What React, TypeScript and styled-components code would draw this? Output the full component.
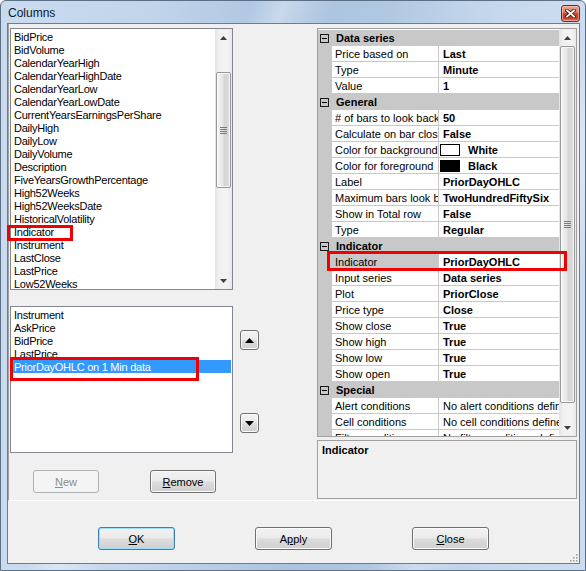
import React from 'react';
import styled, { createGlobalStyle } from 'styled-components';

const FONT = `"Liberation Sans", Arial, sans-serif`;
const GRID_LINE = '#c8c8c8';

const GlobalStyle = createGlobalStyle`
  html, body { margin: 0; padding: 0; }
  body { width: 586px; height: 571px; overflow: hidden; font-family: ${FONT}; background: #fff; }
  * { box-sizing: border-box; }
`;

const Window = styled.div`
  width: 586px;
  height: 571px;
  border: 1px solid #5d6f84;
  border-radius: 6px 6px 0 0;
  display: flex;
  flex-direction: column;
  font-family: ${FONT};
  background:
    linear-gradient(112deg, transparent 0%, transparent 31%, rgba(255,255,255,0.35) 35%, transparent 41%, transparent 73%, rgba(255,255,255,0.3) 79%, transparent 85%),
    linear-gradient(to right, #cadbef 0%, #c2d5eb 25%, #abc3df 50%, #b0c7e1 65%, #c6d8ed 85%, #ccdcf0 100%);
`;

const TitleBar = styled.div`
  height: 22px;
  display: flex;
  align-items: flex-start;
  padding: 0 5px 0 7px;
`;

const Title = styled.div`
  margin-top: 5px;
  font-size: 12px;
  line-height: 15px;
  color: #0b1a2e;
  flex: 1;
`;

const CloseBtn = styled.div`
  margin-top: 4px;
  width: 19px;
  height: 17px;
  border: 1px solid #6e2d22;
  border-radius: 3px;
  background: linear-gradient(to bottom, #eaa897 0%, #dc7a62 45%, #c9482d 50%, #c43e28 80%, #de7d66 100%);
  box-shadow: inset 0 0 0 1px rgba(255, 210, 190, 0.5);
  display: flex;
  align-items: center;
  justify-content: center;
`;

const Client = styled.div`
  flex: 1;
  margin: 0 5px 6px 6px;
  border: 1px solid #6b7d92;
  background: #f0f0f0;
  display: flex;
  flex-direction: column;
`;

const SplitArea = styled.div`
  height: 477px;
  display: flex;
  border-left: 1px solid #a0a0a0;
  border-bottom: 1px solid #ffffff;
`;

const LeftPanel = styled.div`
  position: relative;
  width: 308px;
  padding: 4px 0 0 1px;
  display: flex;
  flex-direction: column;
`;

const RightPanel = styled.div`
  position: relative;
  width: 260px;
  padding-top: 4px;
  display: flex;
  flex-direction: column;
  gap: 3px;
`;

const ListBox = styled.div<{ $h: number }>`
  width: 223px;
  height: ${p => p.$h}px;
  border: 1px solid #828790;
  background: #fff;
  display: flex;
  overflow: hidden;
`;

const ListItems = styled.div`
  flex: 1;
  padding: 1px 1px 0 1px;
  overflow: hidden;
`;

const ListItem = styled.div<{ $selected?: boolean }>`
  height: 13px;
  line-height: 14px;
  padding-left: 2px;
  font-size: 11px;
  letter-spacing: -0.25px;
  white-space: nowrap;
  color: ${p => (p.$selected ? '#fff' : '#000')};
  background: ${p => (p.$selected ? '#3399ff' : 'transparent')};
`;

const VScroll = styled.div`
  width: 17px;
  flex: none;
  display: flex;
  flex-direction: column;
  background: linear-gradient(to right, #e4e4e4 0%, #f1f1f1 25%, #f3f3f3 70%, #e9e9e9 100%);
`;

const ScrollArrow = styled.div`
  height: 17px;
  flex: none;
  display: flex;
  align-items: center;
  justify-content: center;
`;

const ScrollTrack = styled.div<{ $offset: number }>`
  flex: 1;
  padding: ${p => p.$offset}px 1px 0 1px;
`;

const ScrollThumb = styled.div<{ $h: number }>`
  height: ${p => p.$h}px;
  border: 1px solid #979797;
  border-radius: 2px;
  background: linear-gradient(to right, #f3f3f3 0%, #e6e6e6 45%, #d4d4d4 55%, #dcdcdc 100%);
  box-shadow: inset 0 0 0 1px rgba(255, 255, 255, 0.75);
  display: flex;
  align-items: center;
  justify-content: center;
`;

const LowerRow = styled.div`
  margin-top: 16px;
  display: flex;
`;

const ArrowCol = styled.div`
  margin-left: 7px;
  padding-top: 24px;
  display: flex;
  flex-direction: column;
  gap: 63px;
`;

const ButtonRow = styled.div<{ $gap: number; $left: number }>`
  display: flex;
  gap: ${p => p.$gap}px;
  padding-left: ${p => p.$left}px;
`;

const LeftButtons = styled(ButtonRow)`
  margin-top: 17px;
`;

const Btn = styled.button<{ $w: number; $h: number; $default?: boolean }>`
  width: ${p => p.$w}px;
  height: ${p => p.$h}px;
  padding: 0;
  margin: 0;
  font-family: ${FONT};
  font-size: 11px;
  color: #000;
  border: 1px solid ${p => (p.$default ? '#3c7fb1' : '#707070')};
  border-radius: 3px;
  background: linear-gradient(to bottom, #f2f2f2 0%, #ebebeb 46%, #dddddd 52%, #cfcfcf 100%);
  box-shadow: inset 0 0 0 1px ${p => (p.$default ? '#9fdcf7' : '#fbfbfb')};
  display: flex;
  align-items: center;
  justify-content: center;
  &:disabled {
    border-color: #adb2b5;
    background: #f4f4f4;
    color: #8d8d8d;
    box-shadow: none;
  }
`;

const Grid = styled.div`
  height: 409px;
  border: 1px solid #a0a0a0;
  background: #fff;
  display: flex;
  overflow: hidden;
`;

const GridRows = styled.div`
  flex: 1;
  padding-top: 1px;
  overflow: hidden;
`;

const PropRow = styled.div<{ $category?: boolean }>`
  display: grid;
  grid-template-columns: 14px 107px 1fr;
  height: 16px;
  font-size: 11px;
  background: ${p => (p.$category ? GRID_LINE : '#fff')};
`;

const Gutter = styled.div`
  background: ${GRID_LINE};
  display: flex;
  align-items: center;
  padding-left: 2px;
`;

const Expander = styled.div`
  width: 9px;
  height: 9px;
  border: 1px solid #1a1a1a;
  display: flex;
  align-items: center;
  justify-content: center;
  &::after {
    content: '';
    width: 5px;
    height: 1px;
    background: #000;
  }
`;

const CategoryLabel = styled.div`
  grid-column: 2 / 4;
  padding-left: 4px;
  line-height: 16px;
  font-weight: bold;
  color: #000;
  white-space: nowrap;
`;

const NameCell = styled.div<{ $selected?: boolean }>`
  border-right: 1px solid ${GRID_LINE};
  border-bottom: 1px solid ${GRID_LINE};
  padding-left: 3px;
  line-height: 16px;
  white-space: nowrap;
  overflow: hidden;
  color: #000;
  background: ${p => (p.$selected ? GRID_LINE : '#fff')};
`;

const ValueCell = styled.div<{ $plain?: boolean }>`
  border-bottom: 1px solid ${GRID_LINE};
  padding-left: 4px;
  line-height: 16px;
  white-space: nowrap;
  overflow: hidden;
  font-weight: ${p => (p.$plain ? 'normal' : 'bold')};
  color: #000;
  display: flex;
  align-items: center;
`;

const Swatch = styled.span<{ $color: string }>`
  width: 20px;
  height: 12px;
  margin-left: -3px;
  margin-right: 8px;
  border: 1px solid #000;
  background: ${p => p.$color};
  flex: none;
`;

const Description = styled.div`
  height: 59px;
  border: 1px solid #a0a0a0;
  background: #f0f0f0;
  padding: 3px 4px;
  font-size: 11px;
  font-weight: bold;
  line-height: 13px;
  color: #000;
`;

const Footer = styled.div`
  flex: 1;
  display: flex;
  padding: 26px 0 0 90px;
`;

const Grip = styled.div`
  margin-left: auto;
  align-self: flex-end;
  margin-bottom: 1px;
  margin-right: 1px;
  display: flex;
`;

const RedBox = styled.div<{ $x: number; $y: number; $w: number; $h: number }>`
  position: absolute;
  left: ${p => p.$x}px;
  top: ${p => p.$y}px;
  width: ${p => p.$w}px;
  height: ${p => p.$h}px;
  border: 3px solid #f00000;
  pointer-events: none;
`;

const UpGlyph = () => (
  <svg width="7" height="4" viewBox="0 0 7 4">
    <polygon points="3.5,0 7,4 0,4" fill="#3f3f3f" />
  </svg>
);
const DownGlyph = () => (
  <svg width="7" height="4" viewBox="0 0 7 4">
    <polygon points="0,0 7,0 3.5,4" fill="#3f3f3f" />
  </svg>
);
const GripLines = () => (
  <svg width="7" height="7" viewBox="0 0 7 7">
    {[0, 2, 4, 6].map(y => (
      <line key={y} x1="0" x2="7" y1={y + 0.5} y2={y + 0.5} stroke="#7a7a7a" strokeWidth="1" />
    ))}
  </svg>
);

const Scrollbar: React.FC<{ offset: number; thumb: number }> = ({ offset, thumb }) => (
  <VScroll>
    <ScrollArrow><UpGlyph /></ScrollArrow>
    <ScrollTrack $offset={offset}>
      <ScrollThumb $h={thumb}><GripLines /></ScrollThumb>
    </ScrollTrack>
    <ScrollArrow><DownGlyph /></ScrollArrow>
  </VScroll>
);

const available = [
  'BidPrice', 'BidVolume', 'CalendarYearHigh', 'CalendarYearHighDate', 'CalendarYearLow',
  'CalendarYearLowDate', 'CurrentYearsEarningsPerShare', 'DailyHigh', 'DailyLow', 'DailyVolume',
  'Description', 'FiveYearsGrowthPercentage', 'High52Weeks', 'High52WeeksDate', 'HistoricalVolatility',
  'Indicator', 'Instrument', 'LastClose', 'LastPrice', 'Low52Weeks',
];

const selectedCols = ['Instrument', 'AskPrice', 'BidPrice', 'LastPrice', 'PriorDayOHLC on 1 Min data'];

type Prop = { name: string; value: string; swatch?: string; plain?: boolean; selected?: boolean };
type Cat = { title: string; props: Prop[] };

const categories: Cat[] = [
  {
    title: 'Data series',
    props: [
      { name: 'Price based on', value: 'Last' },
      { name: 'Type', value: 'Minute' },
      { name: 'Value', value: '1' },
    ],
  },
  {
    title: 'General',
    props: [
      { name: '# of bars to look back', value: '50' },
      { name: 'Calculate on bar close', value: 'False' },
      { name: 'Color for background', value: 'White', swatch: '#fff' },
      { name: 'Color for foreground', value: 'Black', swatch: '#000' },
      { name: 'Label', value: 'PriorDayOHLC' },
      { name: 'Maximum bars look back', value: 'TwoHundredFiftySix' },
      { name: 'Show in Total row', value: 'False' },
      { name: 'Type', value: 'Regular' },
    ],
  },
  {
    title: 'Indicator',
    props: [
      { name: 'Indicator', value: 'PriorDayOHLC', selected: true },
      { name: 'Input series', value: 'Data series' },
      { name: 'Plot', value: 'PriorClose' },
      { name: 'Price type', value: 'Close' },
      { name: 'Show close', value: 'True' },
      { name: 'Show high', value: 'True' },
      { name: 'Show low', value: 'True' },
      { name: 'Show open', value: 'True' },
    ],
  },
  {
    title: 'Special',
    props: [
      { name: 'Alert conditions', value: 'No alert conditions defined', plain: true },
      { name: 'Cell conditions', value: 'No cell conditions defined', plain: true },
      { name: 'Filter conditions', value: 'No filter conditions defined', plain: true },
    ],
  },
];

export default function App() {
  return (
    <>
      <GlobalStyle />
      <Window>
        <TitleBar>
          <Title>Columns</Title>
          <CloseBtn>
            <svg width="11" height="9" viewBox="0 0 11 9">
              <path d="M2 1.5 L9 7.5 M9 1.5 L2 7.5" stroke="#4a1a10" strokeWidth="3.6" strokeLinecap="square" />
              <path d="M2 1.5 L9 7.5 M9 1.5 L2 7.5" stroke="#ffffff" strokeWidth="1.8" strokeLinecap="square" />
            </svg>
          </CloseBtn>
        </TitleBar>
        <Client>
          <SplitArea>
            <LeftPanel>
              <ListBox $h={262}>
                <ListItems>
                  {available.map(a => (
                    <ListItem key={a}>{a}</ListItem>
                  ))}
                </ListItems>
                <Scrollbar offset={26} thumb={116} />
              </ListBox>
              <LowerRow>
                <ListBox $h={147}>
                  <ListItems>
                    {selectedCols.map((c, i) => (
                      <ListItem key={c} $selected={i === selectedCols.length - 1}>{c}</ListItem>
                    ))}
                  </ListItems>
                </ListBox>
                <ArrowCol>
                  <Btn $w={19} $h={20} aria-label="Move up">
                    <svg width="9" height="5" viewBox="0 0 9 5"><polygon points="4.5,0 9,5 0,5" fill="#000" /></svg>
                  </Btn>
                  <Btn $w={19} $h={20} aria-label="Move down">
                    <svg width="9" height="5" viewBox="0 0 9 5"><polygon points="0,0 9,0 4.5,5" fill="#000" /></svg>
                  </Btn>
                </ArrowCol>
              </LowerRow>
              <LeftButtons $gap={51} $left={23}>
                <Btn $w={66} $h={23} disabled><span><u>N</u>ew</span></Btn>
                <Btn $w={66} $h={23}><span><u>R</u>emove</span></Btn>
              </LeftButtons>
              <RedBox $x={-2} $y={201} $w={66} $h={16} />
              <RedBox $x={1} $y={333} $w={189} $h={24} />
            </LeftPanel>
            <RightPanel>
              <Grid>
                <GridRows>
                  {categories.map(cat => (
                    <React.Fragment key={cat.title}>
                      <PropRow $category>
                        <Gutter><Expander /></Gutter>
                        <CategoryLabel>{cat.title}</CategoryLabel>
                      </PropRow>
                      {cat.props.map(p => (
                        <PropRow key={cat.title + p.name}>
                          <Gutter />
                          <NameCell $selected={p.selected}>{p.name}</NameCell>
                          <ValueCell $plain={p.plain}>
                            {p.swatch && <Swatch $color={p.swatch} />}
                            {p.value}
                          </ValueCell>
                        </PropRow>
                      ))}
                    </React.Fragment>
                  ))}
                </GridRows>
                <Scrollbar offset={0} thumb={357} />
              </Grid>
              <Description>Indicator</Description>
              <RedBox $x={10} $y={227} $w={240} $h={20} />
            </RightPanel>
          </SplitArea>
          <Footer>
            <ButtonRow $gap={80} $left={0}>
              <Btn $w={77} $h={23} $default><span><u>O</u>K</span></Btn>
              <Btn $w={77} $h={23}><span>A<u>p</u>ply</span></Btn>
              <Btn $w={77} $h={23}><span><u>C</u>lose</span></Btn>
            </ButtonRow>
            <Grip>
              <svg width="10" height="10" viewBox="0 0 10 10">
                {[[8, 2], [5, 5], [8, 5], [2, 8], [5, 8], [8, 8]].map(([x, y]) => (
                  <rect key={`${x}-${y}`} x={x} y={y} width="1.5" height="1.5" fill="#9a9a9a" />
                ))}
              </svg>
            </Grip>
          </Footer>
        </Client>
      </Window>
    </>
  );
}
